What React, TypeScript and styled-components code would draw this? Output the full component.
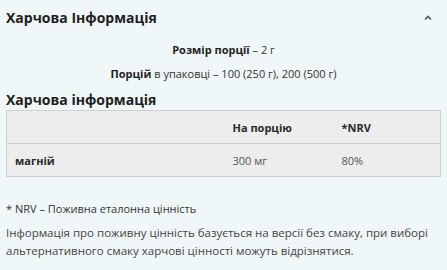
import React from 'react'
import styled, {createGlobalStyle} from 'styled-components'

const Global = createGlobalStyle`
  body {
    margin: 0;
    background: #f0f7f9;
    font-family: "Open Sans", "Noto Sans", sans-serif;
    color: #222;
  }
`

const Panel = styled.div`
  width: 447px;
  height: 270px;
  padding: 0 6px;
  box-sizing: border-box;
  overflow: hidden;
`

const Header = styled.div`
  display: flex;
  justify-content: space-between;
  align-items: center;
  height: 35px;
`

const Title = styled.h2`
  margin: 0;
  font-size: 14px;
  font-weight: 700;
  color: #1e1e1e;
`

const Chevron = styled.svg`
  width: 10px;
  height: 10px;
  margin-right: 8px;
  color: #555;
`

const Serving = styled.div`
  text-align: center;
  font-size: 11px;
  color: #333;
  line-height: 24px;
  margin-top: 3px;
  b {
    font-weight: 700;
    color: #222;
  }
`

const SubTitle = styled.h3`
  margin: 4px 0 0;
  font-size: 14px;
  font-weight: 700;
  line-height: 20px;
  color: #1e1e1e;
`

const Table = styled.table`
  width: 100%;
  border-collapse: collapse;
  border: 1px solid #cfcfcf;
  background: #ededed;
  font-size: 11px;
`

const Cell = styled.td<{$head?: boolean; $name?: boolean}>`
  height: 32px;
  padding: 0 0 0 ${(p) => (p.$name ? '8px' : '0')};
  font-weight: ${(p) => (p.$head || p.$name ? 700 : 400)};
  color: ${(p) => (p.$head || p.$name ? '#2a2a2a' : '#555')};
  border-bottom: 1px solid #cfcfcf;
  vertical-align: middle;
`

const Note = styled.p`
  margin: 24px 0 0;
  font-size: 11px;
  color: #333;
`

const Disclaimer = styled.p`
  margin: 8px 0 0;
  font-size: 11.5px;
  line-height: 18px;
  color: #444;
`

export default function App() {
  return (
    <Panel>
      <Global />
      <Header>
        <Title>Харчова Інформація</Title>
        <Chevron viewBox="0 0 10 10" fill="none" stroke="currentColor" strokeWidth="1.6">
          <path d="M2 6.5 L5 3.5 L8 6.5" />
        </Chevron>
      </Header>
      <Serving>
        <div><b>Розмір порції</b> – 2 г</div>
        <div><b>Порцій</b> в упаковці – 100 (250 г), 200 (500 г)</div>
      </Serving>
      <SubTitle>Харчова інформація</SubTitle>
      <Table>
        <colgroup>
          <col style={{width: '226px'}} />
          <col style={{width: '109px'}} />
          <col />
        </colgroup>
        <tbody>
          <tr>
            <Cell $name />
            <Cell $head>На порцію</Cell>
            <Cell $head>*NRV</Cell>
          </tr>
          <tr>
            <Cell $name>магній</Cell>
            <Cell>300 мг</Cell>
            <Cell>80%</Cell>
          </tr>
        </tbody>
      </Table>
      <Note>* NRV – Поживна еталонна цінність</Note>
      <Disclaimer>
        Інформація про поживну цінність базується на версії без смаку, при виборі альтернативного смаку харчові цінності можуть відрізнятися.
      </Disclaimer>
    </Panel>
  )
}
